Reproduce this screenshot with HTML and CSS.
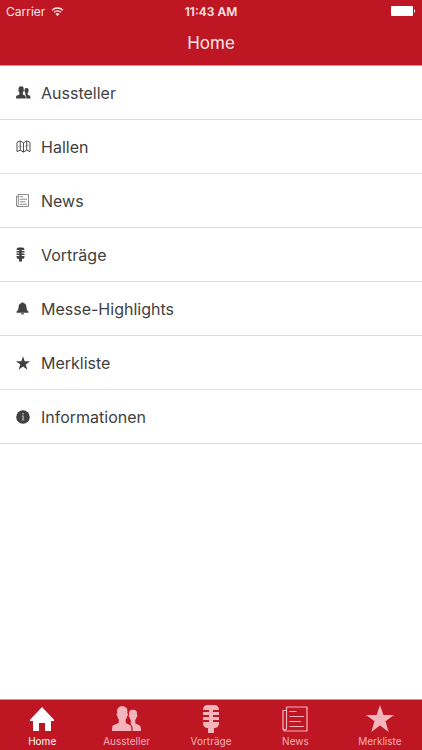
FILE: index.html
```html
<!DOCTYPE html>
<html lang="de">
<head>
<meta charset="utf-8">
<meta name="viewport" content="width=device-width, initial-scale=1">
<title>Home</title>
<link rel="stylesheet" href="styles.css">
</head>
<body>
<svg class="sprite" aria-hidden="true">
  <symbol id="people" viewBox="0 0 30 26">
    <path d="M17.300 8.500C16.600 5.500 18 3.800 21 3.800s4.500 1.700 3.900 4.700c.8.600.4 2.600-.5 3-.2 1.200-.6 2-1.200 2.600V17c.6 1.200 4.800 1.800 5.300 3.500.4 1.500.5 3 .5 4.500h-8.300c0-3-.2-5.300-1.500-6.300-.6-.5-.8-.8-.4-1.700v-2.900c-.6-.6-1-1.400-1.200-2.600-.9-.4-1.200-2.400-.3-3z"/>
    <path d="M0 25c0-2 .1-3.700.6-5 .6-1.500 5.500-2 6.200-3.500v-3c-.7-.8-1.100-1.800-1.300-3-1-.5-1.300-2.800-.3-3.400C4.500 2.500 6.500.3 10.300.3s5.700 2.200 5 6.800c1 .6.700 2.900-.3 3.400-.2 1.200-.6 2.200-1.300 3v3c.7 1.500 4.500 2 5.100 3.500.5 1.300.7 3 .7 5z"/>
  </symbol>
  <symbol id="map" viewBox="0 0 16 14">
    <g fill="none" stroke="currentColor" stroke-width="1" stroke-linejoin="round">
      <path d="M1 2.500l3.500-1.500 3.500 2L11.500 1 15 2.500v10L11.500 11 8 13l-3.500-2L1 12.500zM4.500 1v10M8 3v10M11.500 1v10"/>
      <path d="M2 8l2-2 2.500 2M9.500 7l4-1.500" stroke-width=".5"/>
    </g>
  </symbol>
  <symbol id="news" viewBox="0 0 26 26">
    <path d="M4.500 1h20.500v24H3.500A2.500 2.500 0 0 1 1 22.500V4.500h3.500M4.500 1v20.500a1.700 1.700 0 0 1-3.400 1M7.500 5.500H14.500M7.500 10.500H22M7.500 15.500H19M7.500 20.500H22" fill="none" stroke="currentColor" stroke-width="1.200"/>
  </symbol>
  <symbol id="mic" viewBox="0 0 18 30">
    <path d="M5.500 1h7A4.500 4.500 0 0 1 17 5.500V6h-6v2h6v3h-6v2h6v3h-6v2h6v1.500a4.500 4.500 0 0 1-4.500 4.500H12v5H6v-5h-.5A4.500 4.500 0 0 1 1 19.500V18h6v-2H1v-3h6v-2H1V8h6V6H1v-.5A4.500 4.500 0 0 1 5.500 1z"/>
    <path d="M7 6h4v12H7z"/>
  </symbol>
  <symbol id="bell" viewBox="0 0 14 14">
    <path d="M6 1.200a1 1 0 0 1 2 0C10.200 1.600 11 3.200 11.200 5.200c.2 3 .8 3.800 2.300 5.300v1H.5v-1C2 9 2.600 8.200 2.800 5.200 3 3.200 3.800 1.600 6 1.200zM5.200 12.200h3.600a1.800 1.300 0 0 1-3.600 0z"/>
  </symbol>
  <symbol id="star" viewBox="0 0 28 27">
    <path d="M14 0l3.400 10H28l-8.500 6.300L22.700 27 14 20.500 5.300 27l3.200-10.700L0 10h10.600z"/>
  </symbol>
  <symbol id="info" viewBox="0 0 14 14">
    <circle cx="7" cy="7" r="6.800"/>
    <path d="M6.300 3h1.500v1.400H6.300zM5.900 5.600h1.900v4h.5v.9H5.900v-.9h.4V6.400h-.4z" fill="#aaa"/>
  </symbol>
  <symbol id="home" viewBox="0 0 24 24">
    <path d="M12 0l12 12.800v1.200h-3v10h-6v-8H9v8H3V14H0v-1.200z"/>
  </symbol>
</svg>

<header class="header">
  <div class="status">
    <span class="carrier">Carrier
      <svg class="wifi" viewBox="0 0 14 10" aria-hidden="true">
        <path d="M1 3.600a8.700 8.700 0 0 1 12 0M3.200 5.900a5.600 5.600 0 0 1 7.600 0" fill="none" stroke="currentColor" stroke-width="1.700"/>
        <path d="M7 10L4.800 7.700a3.200 3.200 0 0 1 4.400 0z"/>
      </svg>
    </span>
    <time class="clock">11:43 AM</time>
    <svg class="battery" viewBox="0 0 25 10" aria-hidden="true">
      <rect width="22" height="10" rx="1"/><path d="M23 3.200a2 2 0 0 1 0 3.600z"/>
    </svg>
  </div>
  <h1 class="title">Home</h1>
</header>

<main class="content">
  <ul class="menu">
    <li><a class="row" href="#"><span class="glyph"><svg class="i-people"><use href="#people"/></svg></span>Aussteller</a></li>
    <li><a class="row" href="#"><span class="glyph"><svg class="i-map"><use href="#map"/></svg></span>Hallen</a></li>
    <li><a class="row" href="#"><span class="glyph"><svg class="i-news"><use href="#news"/></svg></span>News</a></li>
    <li><a class="row" href="#"><span class="glyph"><svg class="i-mic"><use href="#mic"/></svg></span>Vorträge</a></li>
    <li><a class="row" href="#"><span class="glyph"><svg class="i-bell"><use href="#bell"/></svg></span>Messe-Highlights</a></li>
    <li><a class="row" href="#"><span class="glyph"><svg class="i-star"><use href="#star"/></svg></span>Merkliste</a></li>
    <li><a class="row" href="#"><span class="glyph"><svg class="i-info"><use href="#info"/></svg></span>Informationen</a></li>
  </ul>
</main>

<nav class="tabs">
  <a class="tab active" href="#" aria-current="page"><span class="tab-icon"><svg class="t-home"><use href="#home"/></svg></span>Home</a>
  <a class="tab" href="#"><span class="tab-icon"><svg class="t-people"><use href="#people"/></svg></span>Aussteller</a>
  <a class="tab" href="#"><span class="tab-icon"><svg class="t-mic"><use href="#mic"/></svg></span>Vorträge</a>
  <a class="tab" href="#"><span class="tab-icon"><svg class="t-news"><use href="#news"/></svg></span>News</a>
  <a class="tab" href="#"><span class="tab-icon"><svg class="t-star"><use href="#star"/></svg></span>Merkliste</a>
</nav>
</body>
</html>
```
FILE: styles.css
```css
* { box-sizing: border-box; }

body {
  margin: 0;
  min-height: 100vh;
  display: flex;
  flex-direction: column;
  background: #fff;
  color: #414141;
  font-family: Inter, "Liberation Sans", sans-serif;
}

a { color: inherit; text-decoration: none; }
svg { display: block; fill: currentColor; }
.sprite { display: none; }

.header {
  background: #be1622;
  color: #fbe6e8;
  border-bottom: 1px solid #dc8b90;
}

.status {
  display: grid;
  grid-template-columns: 1fr auto 1fr;
  align-items: center;
  height: 22px;
  padding: 0 6px;
  font-size: 12px;
}

.carrier { display: flex; align-items: center; gap: 6px; }
.wifi { width: 13px; height: 9px; }
.clock { font-weight: 600; }
.battery { width: 25px; height: 10px; justify-self: end; color: #fff; }

.title {
  margin: 0;
  font-size: 17px;
  font-weight: 400;
  line-height: 43px;
  text-align: center;
}

.content { flex: 1; }
.menu { margin: 0; padding: 0; list-style: none; }

.row {
  display: flex;
  align-items: center;
  height: 54px;
  padding: 0 16px;
  border-bottom: 1px solid #dedede;
  font-size: 16px;
}

.glyph { width: 25px; }
.i-people { width: 15px; height: 13px; }
.i-map { width: 15px; height: 13px; }
.i-news { width: 13px; height: 13px; }
.i-mic { width: 9px; height: 15px; }
.i-bell { width: 13px; height: 13px; }
.i-star { width: 14px; height: 14px; }
.i-info { width: 14px; height: 14px; }

.tabs {
  display: flex;
  background: #be1622;
  border-top: 1px solid #dc8b90;
  color: #f3b4bb;
}

.tab {
  flex: 1;
  display: flex;
  flex-direction: column;
  align-items: center;
  padding: 2px 0 3px;
  font-size: 10px;
  line-height: 12px;
}

.tab.active { color: #fff; }
.tab-icon { display: flex; align-items: center; height: 33px; }
.t-home { width: 24px; height: 24px; }
.t-people { width: 30px; height: 26px; }
.t-mic { width: 18px; height: 30px; }
.t-news { width: 26px; height: 26px; }
.t-star { width: 28px; height: 27px; }
```
